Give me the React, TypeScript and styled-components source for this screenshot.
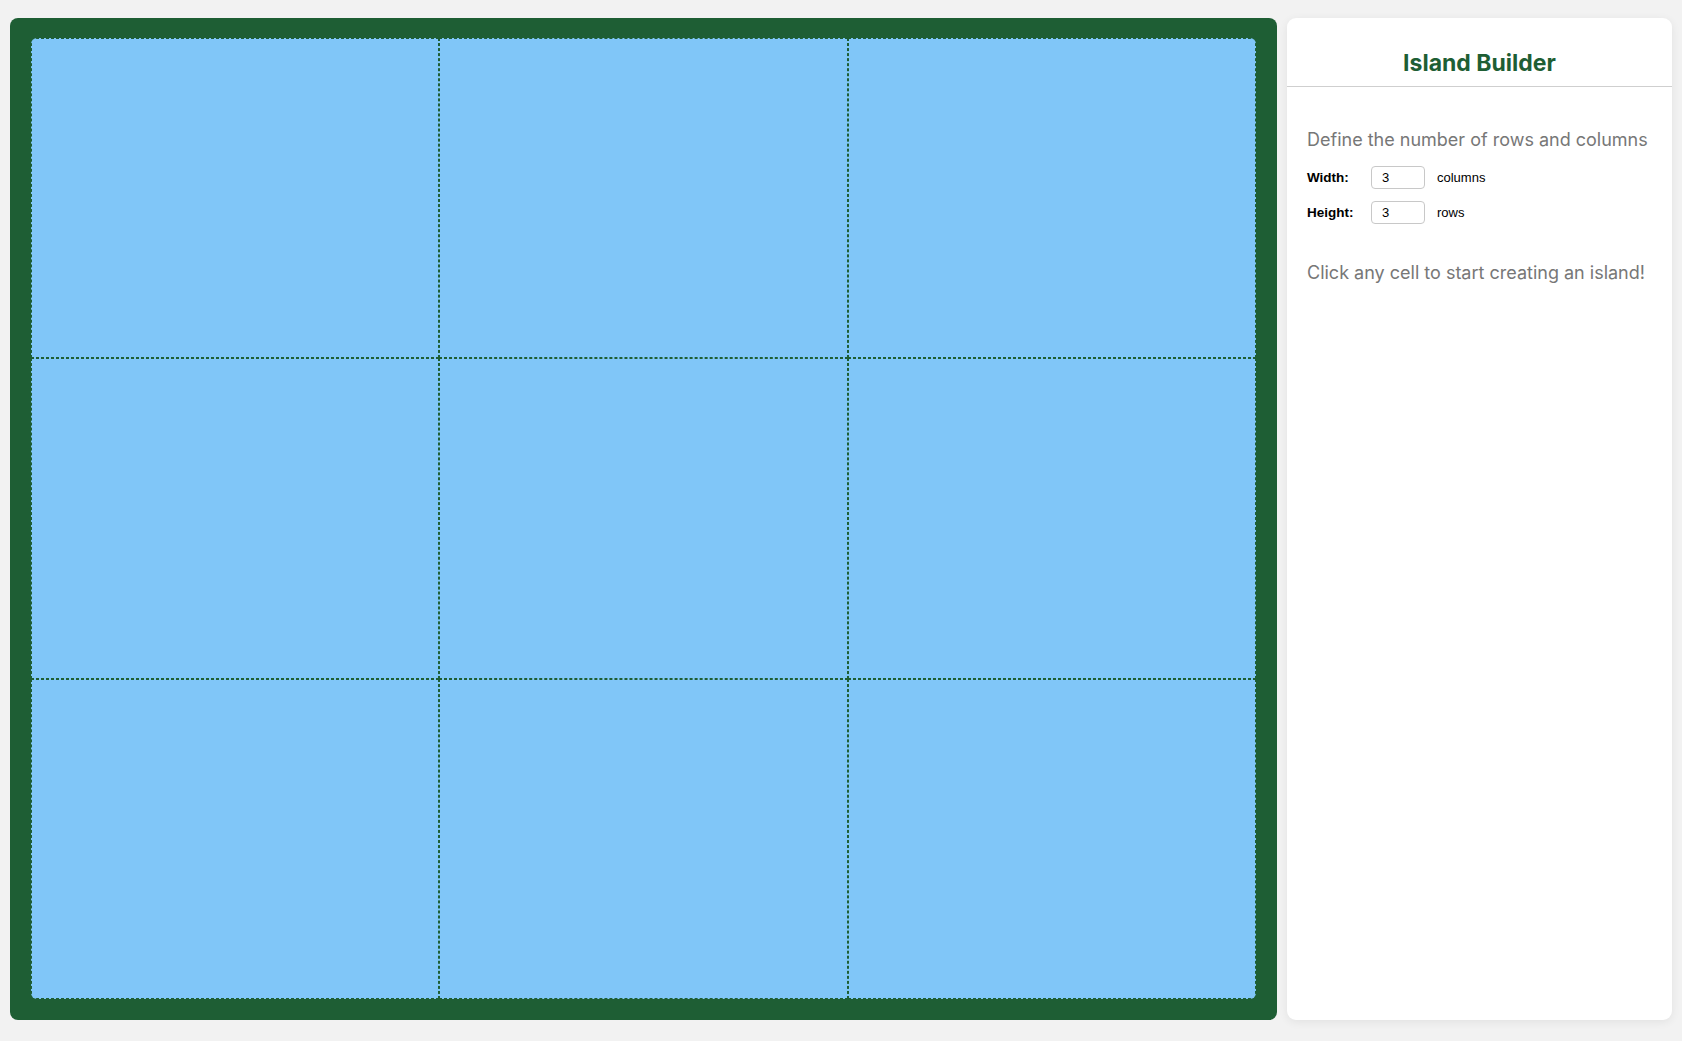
import React, { useState } from "react";
import styled, { createGlobalStyle } from "styled-components";

const GlobalStyle = createGlobalStyle`
  html, body {
    margin: 0;
    padding: 0;
    background: #f2f2f2;
    font-family: Inter, "Noto Sans", "Liberation Sans", sans-serif;
  }
  * { box-sizing: border-box; }
`;

const Page = styled.div`
  display: flex;
  gap: 10px;
  height: 1041px;
  padding: 18px 10px 21px 10px;
`;

const Board = styled.div`
  flex: 1;
  background: #1e5e34;
  border-radius: 8px;
  padding: 20px 21px 21px 21px;
  display: flex;
`;

const Grid = styled.div<{ $cols: number; $rows: number }>`
  flex: 1;
  display: grid;
  grid-template-columns: repeat(${(p) => p.$cols}, 1fr);
  grid-template-rows: repeat(${(p) => p.$rows}, 1fr);
  border-radius: 6px;
  overflow: hidden;
`;

const Cell = styled.div`
  background: #80c6f8;
  border: 1px dashed #1e5e34;
  cursor: pointer;
`;

const Sidebar = styled.aside`
  width: 385px;
  background: #ffffff;
  border-radius: 9px;
  box-shadow: 0 2px 10px rgba(0, 0, 0, 0.07);
  display: flex;
  flex-direction: column;
`;

const Header = styled.div`
  padding: 31px 20px 9px;
  border-bottom: 1px solid #cfcfcf;
  text-align: center;
`;

const Title = styled.h1`
  margin: 0;
  font-size: 23px;
  line-height: 28px;
  font-weight: 700;
  color: #1e5e34;
`;

const Content = styled.div`
  padding: 41px 20px 20px 20px;
`;

const Hint = styled.p`
  margin: 0;
  font-size: 18px;
  line-height: 24px;
  color: #777777;
`;

const Form = styled.div`
  display: flex;
  flex-direction: column;
  gap: 12px;
  margin: 14px 0 37px;
  font-family: "Liberation Sans", Arial, sans-serif;
`;

const Row = styled.div`
  display: flex;
  align-items: center;
`;

const Label = styled.label`
  width: 64px;
  font-size: 13.5px;
  font-weight: 700;
  color: #000;
`;

const NumberInput = styled.input`
  width: 54px;
  height: 23px;
  padding: 0 10px 1px;
  border: 1px solid #c8c8c8;
  border-radius: 4px;
  font-family: inherit;
  font-size: 13px;
  color: #000;
  outline: none;
  -moz-appearance: textfield;
  &::-webkit-outer-spin-button,
  &::-webkit-inner-spin-button {
    -webkit-appearance: none;
    margin: 0;
  }
`;

const Unit = styled.span`
  margin-left: 12px;
  font-size: 13px;
  color: #000;
`;

export default function App() {
  const [cols, setCols] = useState(3);
  const [rows, setRows] = useState(3);
  const cells = Array.from({ length: cols * rows }, (_, i) => i);

  return (
    <>
      <GlobalStyle />
      <Page>
        <Board>
          <Grid $cols={cols} $rows={rows}>
            {cells.map((i) => (
              <Cell key={i} />
            ))}
          </Grid>
        </Board>
        <Sidebar>
          <Header>
            <Title>Island Builder</Title>
          </Header>
          <Content>
            <Hint>Define the number of rows and columns</Hint>
            <Form>
              <Row>
                <Label>Width:</Label>
                <NumberInput
                  type="number"
                  value={cols}
                  onChange={(e) => setCols(Math.max(1, Number(e.target.value) || 1))}
                />
                <Unit>columns</Unit>
              </Row>
              <Row>
                <Label>Height:</Label>
                <NumberInput
                  type="number"
                  value={rows}
                  onChange={(e) => setRows(Math.max(1, Number(e.target.value) || 1))}
                />
                <Unit>rows</Unit>
              </Row>
            </Form>
            <Hint>Click any cell to start creating an island!</Hint>
          </Content>
        </Sidebar>
      </Page>
    </>
  );
}
